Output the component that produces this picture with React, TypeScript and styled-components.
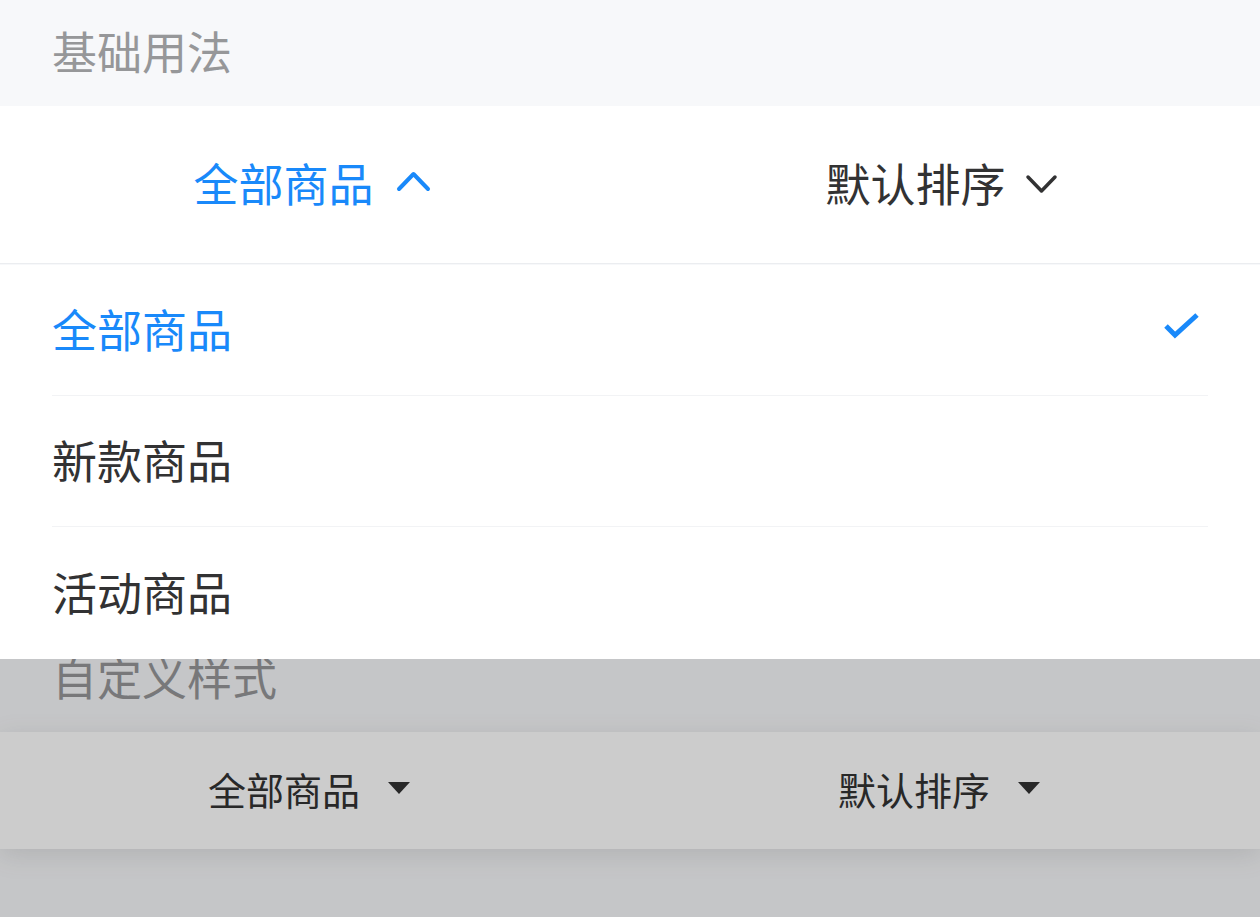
import React, { useState } from "react";
import styled, { createGlobalStyle } from "styled-components";

const GlobalStyle = createGlobalStyle`
  html, body {
    margin: 0;
    padding: 0;
    background: #f7f8fa;
  }
  * {
    box-sizing: border-box;
  }
`;

const BLUE = "#1989fa";
const TEXT = "#323233";

const menuOptions = ["全部商品", "新款商品", "活动商品"];

const Page = styled.div`
  position: relative;
  width: 100%;
  height: 917px;
  overflow: hidden;
  background: #f7f8fa;
  font-family: "Noto Sans CJK SC", "Noto Sans", sans-serif;
`;

const Section = styled.section<{ $gap?: number }>`
  margin-top: ${(p) => p.$gap || 0}px;
`;

const BlockTitle = styled.h2`
  margin: 0;
  height: 106px;
  padding: 0 52px 6px;
  display: flex;
  align-items: center;
  font-size: 45px;
  font-weight: 400;
  line-height: 1;
  color: #969799;
`;

const MenuBar = styled.div<{ $height: number; $shadow?: boolean }>`
  display: flex;
  height: ${(p) => p.$height}px;
  background: #fff;
  border-bottom: ${(p) => (p.$shadow ? "none" : "1px solid #ebedf0")};
  box-shadow: ${(p) =>
    p.$shadow ? "0 6px 24px rgba(100, 101, 102, 0.16)" : "none"};
`;

const MenuItem = styled.div<{ $active?: boolean; $size: number; $gap: number; $shift: number }>`
  flex: 1;
  display: flex;
  align-items: center;
  justify-content: center;
  gap: ${(p) => p.$gap}px;
  padding: 0 ${(p) => p.$shift}px 4px 0;
  font-size: ${(p) => p.$size}px;
  line-height: 1;
  color: ${(p) => (p.$active ? BLUE : TEXT)};
  cursor: pointer;
`;

const Layer = styled.div`
  position: absolute;
  top: 265px;
  left: 0;
  right: 0;
  bottom: 0;
  display: flex;
  flex-direction: column;
  z-index: 5;
`;

const Panel = styled.div`
  background: #fff;
  padding: 0 52px;
`;

const Option = styled.div<{ $active?: boolean; $last?: boolean }>`
  height: ${(p) => (p.$last ? 132 : 131)}px;
  display: flex;
  align-items: center;
  justify-content: space-between;
  padding: 0 8px 4px 0;
  border-bottom: ${(p) => (p.$last ? "none" : "1px solid #f2f3f5")};
  font-size: 45px;
  line-height: 1;
  color: ${(p) => (p.$active ? BLUE : TEXT)};
  cursor: pointer;
`;

const Overlay = styled.div`
  flex: 1;
  background: rgba(0, 0, 0, 0.2);
`;

const Chevron = ({ up, color }: { up?: boolean; color: string }) => (
  <svg width="35" height="26" viewBox="0 0 35 26" style={{ marginTop: up ? -4 : 2 }}>
    <polyline
      points={up ? "3,21 17.5,6 32,21" : "4,6 17.5,20 31,6"}
      fill="none"
      stroke={color}
      strokeWidth={up ? 4 : 3.5}
      strokeLinecap="round"
      strokeLinejoin="round"
    />
  </svg>
);

const Check = () => (
  <svg width="37" height="28" viewBox="0 0 37 28" style={{ marginTop: -6 }}>
    <polyline
      points="3,15 12,24 34,4"
      fill="none"
      stroke={BLUE}
      strokeWidth="5"
      strokeLinejoin="miter"
    />
  </svg>
);

const Caret = () => (
  <svg width="22" height="13" viewBox="0 0 22 13">
    <polygon points="0,0 22,0 11,12" fill={TEXT} />
  </svg>
);

const App: React.FC = () => {
  const [value, setValue] = useState(0);

  return (
    <Page>
      <GlobalStyle />
      <Section>
        <BlockTitle>基础用法</BlockTitle>
        <MenuBar $height={158}>
          <MenuItem $active $size={45} $gap={22} $shift={6}>
            全部商品
            <Chevron up color={BLUE} />
          </MenuItem>
          <MenuItem $size={45} $gap={18} $shift={6}>
            默认排序
            <Chevron color={TEXT} />
          </MenuItem>
        </MenuBar>
      </Section>

      <Section $gap={362}>
        <BlockTitle>自定义样式</BlockTitle>
        <MenuBar $height={117} $shadow>
          <MenuItem $size={38} $gap={28} $shift={12}>
            全部商品
            <Caret />
          </MenuItem>
          <MenuItem $size={38} $gap={28} $shift={12}>
            默认排序
            <Caret />
          </MenuItem>
        </MenuBar>
      </Section>

      <Layer>
        <Panel>
          {menuOptions.map((label, i) => (
            <Option
              key={label}
              $active={i === value}
              $last={i === menuOptions.length - 1}
              onClick={() => setValue(i)}
            >
              {label}
              {i === value && <Check />}
            </Option>
          ))}
        </Panel>
        <Overlay />
      </Layer>
    </Page>
  );
};

export default App;
